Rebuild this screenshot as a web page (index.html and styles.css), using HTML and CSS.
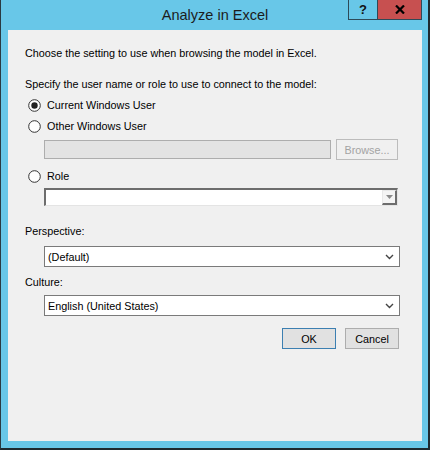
FILE: index.html
```html
<!DOCTYPE html>
<html lang="en">
<head>
    <meta charset="UTF-8">
    <meta name="viewport" content="width=device-width, initial-scale=1.0">
    <title>Analyze in Excel</title>
    <link rel="stylesheet" href="styles.css">
</head>
<body>
    <div class="window">
        <div class="titlebar">
            <div></div>
            <div class="title">Analyze in Excel</div>
            <div class="title-buttons">
                <div class="tb-btn help">?</div>
                <div class="tb-btn close">
                    <svg width="10" height="9" viewBox="0 0 10 9">
                        <path d="M1 0.5 L9 8.5 M9 0.5 L1 8.5" stroke="#000" stroke-width="2.2" fill="none"/>
                    </svg>
                </div>
            </div>
        </div>

        <div class="content">
            <div class="intro">Choose the setting to use when browsing the model in Excel.</div>

            <div class="label specify">Specify the user name or role to use to connect to the model:</div>

            <div class="radio-row first">
                <svg class="radio" width="13" height="13" viewBox="0 0 13 13">
                    <circle cx="6.5" cy="6.5" r="5.8" fill="#fff" stroke="#333" stroke-width="1"/>
                    <circle cx="6.5" cy="6.5" r="3.2" fill="#222"/>
                </svg>
                <span>Current Windows User</span>
            </div>
            <div class="radio-row">
                <svg class="radio" width="13" height="13" viewBox="0 0 13 13">
                    <circle cx="6.5" cy="6.5" r="5.8" fill="#fff" stroke="#333" stroke-width="1"/>
                </svg>
                <span>Other Windows User</span>
            </div>

            <div class="user-row">
                <div class="textbox disabled"></div>
                <div class="button browse">Browse...</div>
            </div>

            <div class="radio-row role">
                <svg class="radio" width="13" height="13" viewBox="0 0 13 13">
                    <circle cx="6.5" cy="6.5" r="5.8" fill="#fff" stroke="#333" stroke-width="1"/>
                </svg>
                <span>Role</span>
            </div>

            <div class="combo">
                <div class="combo-text"></div>
                <div class="combo-btn">
                    <svg width="7" height="4" viewBox="0 0 7 4">
                        <path d="M0 0 H7 L3.5 4 Z" fill="#8a8a8a"/>
                    </svg>
                </div>
            </div>

            <div class="label perspective">Perspective:</div>
            <div class="select">
                <span>(Default)</span>
                <svg width="9" height="6" viewBox="0 0 9 6">
                    <path d="M1 1 L4.5 4.5 L8 1" stroke="#444" stroke-width="1.4" fill="none"/>
                </svg>
            </div>

            <div class="label culture">Culture:</div>
            <div class="select culture-select">
                <span>English (United States)</span>
                <svg width="9" height="6" viewBox="0 0 9 6">
                    <path d="M1 1 L4.5 4.5 L8 1" stroke="#444" stroke-width="1.4" fill="none"/>
                </svg>
            </div>

            <div class="actions">
                <div class="button default">OK</div>
                <div class="button">Cancel</div>
            </div>
        </div>
    </div>
</body>
</html>
```

FILE: styles.css
```css
body {
    margin: 0;
    font-family: "Liberation Sans", Arial, sans-serif;
    font-size: 10.8px;
    color: #000;
}
.window {
    width: 430px;
    height: 450px;
    box-sizing: border-box;
    background: #68c7e8;
    border-left: 1px solid #2a3a42;
    border-right: 2px solid #1e2a30;
    border-bottom: 2px solid #1e2a30;
    display: flex;
    flex-direction: column;
}
.titlebar {
    height: 30px;
    flex: none;
    display: grid;
    grid-template-columns: 1fr auto 1fr;
}
.title {
    font-size: 14.5px;
    color: #1c1c1c;
    line-height: 30px;
    padding-left: 1px;
}
.title-buttons {
    display: flex;
    justify-content: flex-end;
    align-items: flex-start;
    padding-right: 6px;
}
.tb-btn {
    height: 20px;
    box-sizing: border-box;
    border: 1px solid #2d4a58;
    border-top: none;
    display: flex;
    align-items: center;
    justify-content: center;
}
.help {
    width: 29px;
    font-weight: bold;
    font-size: 13px;
    color: #111;
    border-right: none;
}
.close {
    width: 45px;
    background: #c75050;
}
.content {
    flex: 1;
    margin: 0 6px 7px 7px;
    background: #f0f0f0;
    padding: 16px 22px 0 17px;
}
.intro, .label {
    line-height: 15px;
    height: 15px;
    white-space: nowrap;
}
.specify {
    margin-top: 16px;
}
.radio-row {
    height: 20px;
    display: flex;
    align-items: center;
    padding-left: 3px;
    margin-top: 1px;
}
.radio-row.first {
    margin-top: 3px;
}
.radio-row.role {
    margin-top: 6px;
}
.radio {
    margin-right: 6px;
}
.user-row {
    margin: 3px 2px 0 19px;
    display: flex;
    align-items: center;
    gap: 5px;
    height: 21px;
}
.textbox {
    height: 19px;
    box-sizing: border-box;
}
.textbox.disabled {
    flex: 1;
    background: #e3e3e3;
    border: 1px solid #adadad;
}
.button {
    width: 54px;
    height: 21px;
    box-sizing: border-box;
    border: 1px solid #adadad;
    background: #e1e1e1;
    display: flex;
    align-items: center;
    justify-content: center;
}
.browse {
    width: 62px;
    background: #f0f0f0;
    color: #a3a3a3;
    border-color: #bcbcbc;
}
.combo {
    margin-top: 2px;
    margin-left: 19px;
    margin-right: 2px;
    height: 18px;
    box-sizing: border-box;
    background: #fff;
    border-top: 2px solid #6d6d6d;
    border-left: 2px solid #6d6d6d;
    border-bottom: 1px solid #e4e4e4;
    border-right: 1px solid #e4e4e4;
    display: flex;
    justify-content: flex-end;
}
.combo-btn {
    width: 15px;
    height: 15px;
    box-sizing: border-box;
    background: #f4f4f4;
    border-top: 1px solid #e8e8e8;
    border-left: 1px solid #e8e8e8;
    border-right: 2px solid #6d6d6d;
    border-bottom: 2px solid #6d6d6d;
    display: flex;
    align-items: center;
    justify-content: center;
}
.perspective {
    margin-top: 18px;
}
.select {
    margin-top: 7px;
    margin-left: 19px;
    height: 21px;
    box-sizing: border-box;
    background: #fff;
    border: 1px solid #7a7a7a;
    display: flex;
    align-items: center;
    justify-content: space-between;
    padding: 0 5px 0 3px;
}
.culture {
    margin-top: 8px;
}
.culture-select {
    margin-top: 5px;
}
.actions {
    margin-top: 12px;
    display: flex;
    justify-content: flex-end;
    gap: 9px;
    padding-right: 1px;
}
.button.default {
    border-color: #3c7fb1;
}
```
